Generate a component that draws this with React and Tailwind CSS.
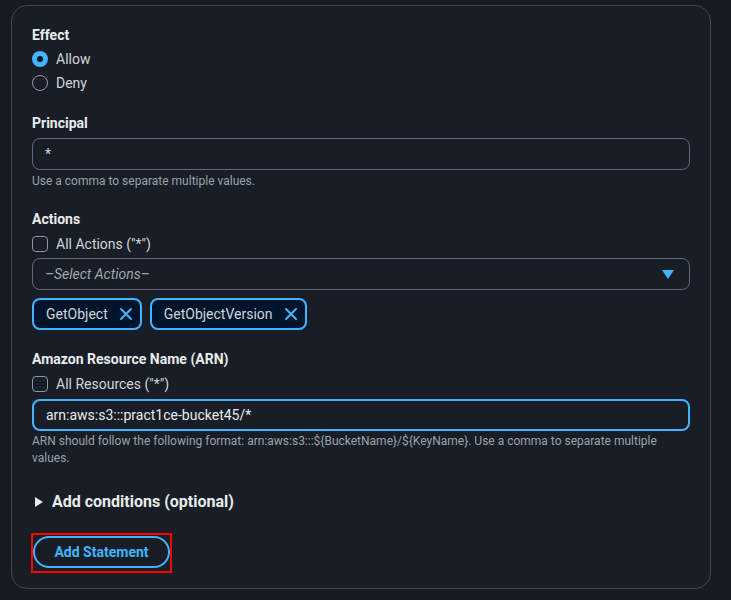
import React from "react";

const font = { fontFamily: "Roboto, 'Noto Sans', Arial, sans-serif" };

const Label = ({ children, className = "" }) => (
  <div className={`text-[14px] leading-[20px] font-bold text-[#e9ebed] ${className}`}>{children}</div>
);

const Radio = ({ checked, label, className = "" }) => (
  <div className={`flex items-center h-[20px] gap-[8px] ${className}`}>
    {checked ? (
      <span className="w-[16px] h-[16px] rounded-full bg-[#42b4ff] flex items-center justify-center">
        <span className="w-[6px] h-[6px] rounded-full bg-[#0f141a]" />
      </span>
    ) : (
      <span className="w-[16px] h-[16px] rounded-full border-[1.5px] border-[#8d99a8]" />
    )}
    <span className="text-[14px] text-[#d1d5db]">{label}</span>
  </div>
);

const Checkbox = ({ label, className = "" }) => (
  <div className={`flex items-center h-[20px] gap-[8px] ${className}`}>
    <span className="w-[16px] h-[16px] rounded-[4px] border-[1.5px] border-[#8d99a8]" />
    <span className="text-[14px] text-[#d1d5db]">{label}</span>
  </div>
);

const Help = ({ children, className = "" }) => (
  <div className={`text-[12px] leading-[17px] text-[#9aa3ae] ${className}`}>{children}</div>
);

const Tag = ({ label }) => (
  <div className="h-[32px] flex items-center gap-[11px] pl-[12px] pr-[7px] rounded-[8px] border-2 border-[#42b4ff] bg-[#00142b]">
    <span className="text-[14px] text-[#d1d5db]">{label}</span>
    <svg width="14" height="14" viewBox="0 0 14 14" fill="none" stroke="#42b4ff" strokeWidth="2" strokeLinecap="round">
      <path d="M2 2 L12 12 M12 2 L2 12" />
    </svg>
  </div>
);

export default function App() {
  return (
    <div className="min-h-[600px] bg-[#161b23] pl-[11px] pr-[20px] pt-[5px]" style={font}>
      <div className="w-[700px] h-[584px] rounded-[16px] border border-[#414750] bg-[#181d26] px-[20px] pt-[19px]">
        <Label>Effect</Label>
        <Radio checked label="Allow" className="mt-[4px]" />
        <Radio label="Deny" className="mt-[4px]" />

        <Label className="mt-[20px]">Principal</Label>
        <div className="mt-[5px] h-[32px] rounded-[8px] border border-[#5f6b7a] flex items-center px-[12px] text-[14px] text-[#d1d5db]">
          *
        </div>
        <Help className="mt-[3px]">Use a comma to separate multiple values.</Help>

        <Label className="mt-[19px]">Actions</Label>
        <Checkbox label={'All Actions ("*")'} className="mt-[5px]" />
        <div className="mt-[4px] h-[32px] rounded-[8px] border border-[#5f6b7a] flex items-center justify-between pl-[12px] pr-[15px]">
          <span className="text-[14px] italic text-[#a0a8b3]">–Select Actions–</span>
          <svg width="12" height="9" viewBox="0 0 12 9">
            <path d="M0 0 H12 L6 9 Z" fill="#42b4ff" />
          </svg>
        </div>
        <div className="mt-[8px] flex gap-[8px]">
          <Tag label="GetObject" />
          <Tag label="GetObjectVersion" />
        </div>

        <Label className="mt-[19px]">Amazon Resource Name (ARN)</Label>
        <Checkbox label={'All Resources ("*")'} className="mt-[5px]" />
        <div className="mt-[5px] h-[32px] rounded-[8px] border-2 border-[#42b4ff] flex items-center px-[12px] text-[14px] text-[#e9ebed]">
          arn:aws:s3:::pract1ce-bucket45/*
        </div>
        <Help className="mt-[2px]">
          ARN should follow the following format: arn:aws:s3:::{"${BucketName}/${KeyName}"}. Use a comma to separate multiple values.
        </Help>

        <div className="mt-[23px] h-[24px] flex items-center gap-[8px]">
          <svg width="10" height="12" viewBox="0 0 10 12" className="ml-[2px]">
            <path d="M1 1 L9 6 L1 11 Z" fill="#e9ebed" />
          </svg>
          <span className="text-[16px] font-bold text-[#e9ebed]">Add conditions (optional)</span>
        </div>

        <div className="mt-[19px] ml-[-1px] inline-block border-2 border-[#ff0000] pt-[1px] pb-[3px]">
          <button className="h-[32px] w-[137px] rounded-full border-2 border-[#42b4ff] text-[14px] font-bold text-[#42b4ff]">
            Add Statement
          </button>
        </div>
      </div>
    </div>
  );
}
